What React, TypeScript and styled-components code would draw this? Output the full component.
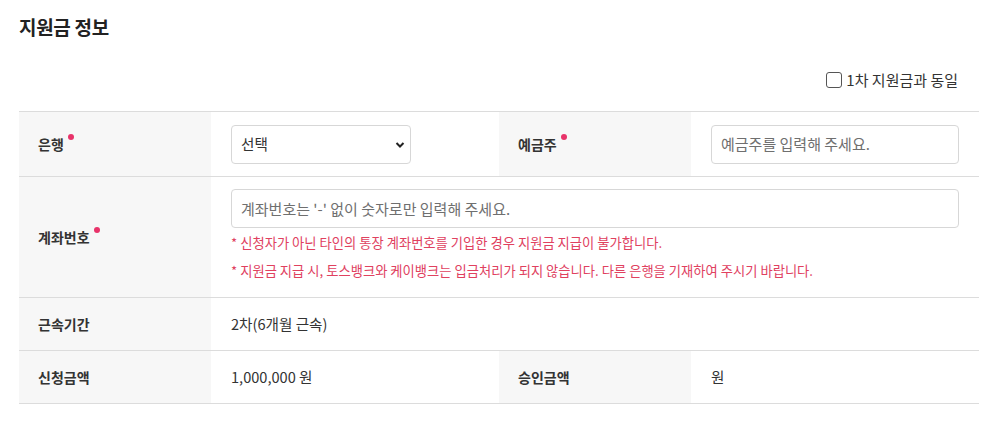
import React from "react";
import styled, { createGlobalStyle } from "styled-components";

const Global = createGlobalStyle`
  html, body { margin: 0; padding: 0; background: #fff; }
  body { font-family: "Noto Sans CJK KR", "Noto Sans", sans-serif; color: #222; }
  * { box-sizing: border-box; }
`;

const Page = styled.div`
  width: 1001px;
  padding: 0 22px 0 19px;
`;

const Title = styled.h2`
  margin: 0;
  padding-top: 13px;
  height: 40px;
  font-size: 19px;
  line-height: 28px;
  font-weight: 700;
  color: #222;
  letter-spacing: -0.3px;
`;

const CheckRow = styled.div`
  display: flex;
  justify-content: flex-end;
  align-items: center;
  height: 71px;
`;

const CheckLabel = styled.label`
  display: flex;
  align-items: center;
  gap: 4px;
  font-size: 15px;
  line-height: 20px;
  color: #333;
  margin-right: 21px;
  margin-top: 9px;
`;

const Box = styled.span`
  width: 16px;
  height: 16px;
  border: 1px solid #555;
  border-radius: 3px;
  background: #fff;
`;

const Table = styled.div`
  display: grid;
  grid-template-columns: 192px 288px 192px 288px;
  border-top: 1px solid #dcdcdc;
`;

const Label = styled.div<{ $h: number }>`
  background: #f7f7f7;
  height: ${(p) => p.$h}px;
  border-bottom: 1px solid #dcdcdc;
  display: flex;
  align-items: center;
  padding-left: 19px;
  font-size: 14px;
  font-weight: 700;
  color: #333;
`;

const LabelText = styled.span`
  position: relative;
  line-height: 20px;
`;

const Dot = styled.span`
  position: absolute;
  right: -10px;
  top: 0px;
  width: 6px;
  height: 6px;
  border-radius: 50%;
  background: #e8336a;
`;

const Cell = styled.div<{ $h: number; $span?: number; $top?: boolean }>`
  grid-column: span ${(p) => p.$span ?? 1};
  height: ${(p) => p.$h}px;
  border-bottom: 1px solid #dcdcdc;
  display: flex;
  flex-direction: column;
  justify-content: ${(p) => (p.$top ? "flex-start" : "center")};
  padding: ${(p) => (p.$top ? "12px 20px 0 20px" : "0 20px")};
  font-size: 14.6px;
  color: #333;
  line-height: 20px;
`;

const SelectWrap = styled.div`
  position: relative;
  width: 180px;
  height: 39px;
  border: 1px solid #d7d7d7;
  border-radius: 4px;
  display: flex;
  align-items: center;
  padding: 0 9px;
  font-size: 14.6px;
  color: #333;
  background: #fff;
`;

const Chevron = styled.svg`
  position: absolute;
  right: 5px;
  top: 15px;
`;

const Input = styled.div<{ $w?: string }>`
  width: ${(p) => p.$w ?? "100%"};
  height: 39px;
  border: 1px solid #d7d7d7;
  border-radius: 4px;
  display: flex;
  align-items: center;
  padding: 0 9px;
  font-size: 15px;
  color: #6f6f6f;
  background: #fff;
`;

const Notes = styled.div`
  margin-top: 5px;
  display: flex;
  flex-direction: column;
  gap: 8px;
`;

const Note = styled.div`
  font-size: 13.3px;
  line-height: 20px;
  color: #e0415f;
`;

export default function App() {
  return (
    <>
      <Global />
      <Page>
        <Title>지원금 정보</Title>
        <CheckRow>
          <CheckLabel>
            <Box />
            1차 지원금과 동일
          </CheckLabel>
        </CheckRow>
        <Table>
          <Label $h={65}>
            <LabelText>
              은행
              <Dot />
            </LabelText>
          </Label>
          <Cell $h={65}>
            <SelectWrap>
              선택
              <Chevron width="10" height="8" viewBox="0 0 10 8">
                <path d="M1.5 2 L5 5.5 L8.5 2" stroke="#222" strokeWidth="2" fill="none" />
              </Chevron>
            </SelectWrap>
          </Cell>
          <Label $h={65}>
            <LabelText>
              예금주
              <Dot />
            </LabelText>
          </Label>
          <Cell $h={65}>
            <Input>예금주를 입력해 주세요.</Input>
          </Cell>

          <Label $h={121}>
            <LabelText>
              계좌번호
              <Dot />
            </LabelText>
          </Label>
          <Cell $h={121} $span={3} $top>
            <Input>계좌번호는 '-' 없이 숫자로만 입력해 주세요.</Input>
            <Notes>
              <Note>* 신청자가 아닌 타인의 통장 계좌번호를 기입한 경우 지원금 지급이 불가합니다.</Note>
              <Note>* 지원금 지급 시, 토스뱅크와 케이뱅크는 입금처리가 되지 않습니다. 다른 은행을 기재하여 주시기 바랍니다.</Note>
            </Notes>
          </Cell>

          <Label $h={53}>
            <LabelText>근속기간</LabelText>
          </Label>
          <Cell $h={53} $span={3}>
            2차(6개월 근속)
          </Cell>

          <Label $h={53}>
            <LabelText>신청금액</LabelText>
          </Label>
          <Cell $h={53}>1,000,000 원</Cell>
          <Label $h={53}>
            <LabelText>승인금액</LabelText>
          </Label>
          <Cell $h={53}>원</Cell>
        </Table>
      </Page>
    </>
  );
}
